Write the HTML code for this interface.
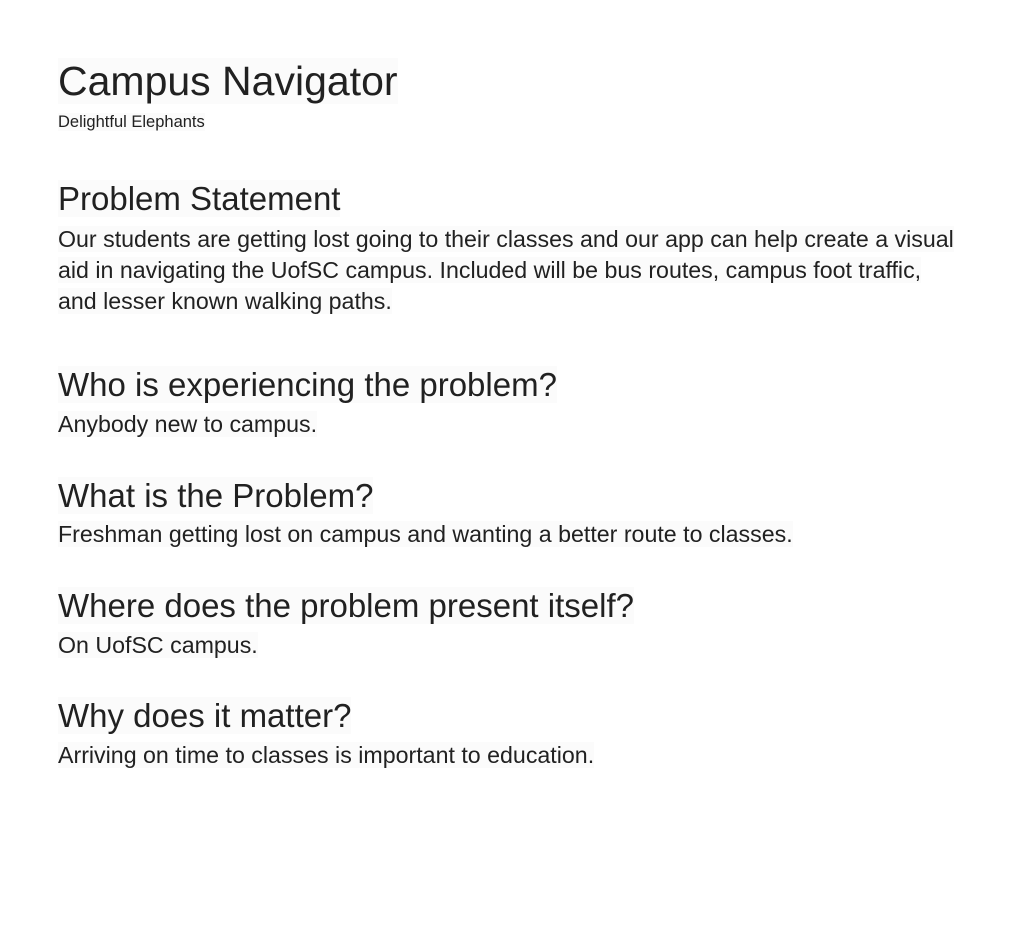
<!DOCTYPE html>
<html><head><meta charset="utf-8"><style>
body{margin:0;width:1009px;height:929px;background:#fff;color:#212121;font-family:"Liberation Sans",Arial,sans-serif;position:relative;overflow:hidden}
div{position:absolute;left:58px;white-space:nowrap}
.h{font-size:33px;line-height:33px}
.b{font-size:23.2px;line-height:31px}
span{background:#fbfbfb}
</style></head><body>
<div style="top:61px;font-size:41px;line-height:41px"><span>Campus Navigator</span></div>
<div style="top:114px;font-size:16.5px;line-height:16.5px"><span>Delightful Elephants</span></div>
<div class="h" style="top:182px"><span>Problem Statement</span></div>
<div class="b" style="top:224px"><span>Our students are getting lost going to their classes and our app can help create a visual</span><br><span>aid in navigating the UofSC campus. Included will be bus routes, campus foot traffic,</span><br><span>and lesser known walking paths.</span></div>
<div class="h" style="top:368px"><span>Who is experiencing the problem?</span></div>
<div class="b" style="top:409px"><span>Anybody new to campus.</span></div>
<div class="h" style="top:479px"><span>What is the Problem?</span></div>
<div class="b" style="top:519px"><span>Freshman getting lost on campus and wanting a better route to classes.</span></div>
<div class="h" style="top:589px"><span>Where does the problem present itself?</span></div>
<div class="b" style="top:630px"><span>On UofSC campus.</span></div>
<div class="h" style="top:699px"><span>Why does it matter?</span></div>
<div class="b" style="top:740px"><span>Arriving on time to classes is important to education.</span></div>
</body></html>
